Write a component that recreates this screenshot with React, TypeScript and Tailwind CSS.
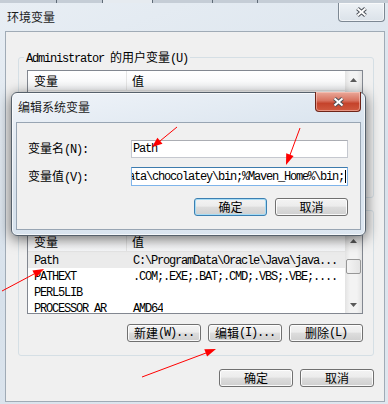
import clsx from "clsx";

const mono = "font-[family-name:Liberation_Mono,monospace] tracking-[-1.2px]";
const cjk = "font-[family-name:Noto_Sans_CJK_SC,sans-serif]";

// splits a label into ascii runs (narrow mono) and CJK runs
function Txt({ s }: { s: string }) {
  const parts = s.match(/[\x00-\x7f]+|[^\x00-\x7f]+/g) ?? [];
  return (
    <>
      {parts.map((p, i) => (
        <span key={i} className={clsx("whitespace-pre", /^[\x00-\x7f]/.test(p) ? mono : cjk)}>
          {p}
        </span>
      ))}
    </>
  );
}

function CloseGlyph() {
  return (
    <svg width="13" height="10" viewBox="0 0 13 10">
      <path d="M2.5 1.5 L10.5 8.5 M10.5 1.5 L2.5 8.5" stroke="#4a4f57" strokeWidth="4" />
      <path d="M2.5 1.5 L10.5 8.5 M10.5 1.5 L2.5 8.5" stroke="#ffffff" strokeWidth="2" />
    </svg>
  );
}

function Btn({ label, focus, wide }: { label: string; focus?: boolean; wide?: boolean }) {
  return (
    <div
      className={clsx(
        "h-[18px] rounded-[3px] border flex items-center justify-center text-[12px] leading-[14px] bg-[linear-gradient(#f3f3f3,#ececec_45%,#dddddd_50%,#cfcfcf)]",
        wide ? "w-[74px]" : "w-[73px]",
        focus
          ? "border-[#3c7fb1] shadow-[inset_0_0_0_1px_#a6dcf5]"
          : "border-[#707070] shadow-[inset_0_0_0_1px_rgba(255,255,255,0.85)]"
      )}
    >
      <Txt s={label} />
    </div>
  );
}

function Arrow({ up }: { up?: boolean }) {
  return (
    <div className="h-[17px] flex items-center justify-center">
      <svg width="7" height="4" viewBox="0 0 7 4">
        <path d={up ? "M0 4 L3.5 0 L7 4 Z" : "M0 0 L3.5 4 L7 0 Z"} fill="#5a5a5a" />
      </svg>
    </div>
  );
}

type Row = { name: string; value: string; sel?: boolean };

function ListView({ rows, height }: { rows: Row[]; height: string }) {
  return (
    <div className={clsx("border border-[#828790] bg-white flex overflow-hidden", height)}>
      <div className="flex-1 flex flex-col overflow-hidden text-[12px] leading-[14px]">
        <div className="h-[20px] shrink-0 flex border-b border-[#e5e5e5] bg-[linear-gradient(#ffffff,#f6f7f9)]">
          <div className="w-[99px] shrink-0 pl-[6px] border-r border-[#e5e5e5] flex items-center">
            <Txt s="变量" />
          </div>
          <div className="pl-[5px] flex items-center">
            <Txt s="值" />
          </div>
        </div>
        {rows.map((r) => (
          <div key={r.name} className={clsx("h-[16px] shrink-0 flex items-center", r.sel && "bg-[#ebebeb]")}>
            <div className="w-[99px] shrink-0 pl-[6px] overflow-hidden">
              <Txt s={r.name} />
            </div>
            <div className="pl-[6px] whitespace-nowrap overflow-hidden">
              <Txt s={r.value} />
            </div>
          </div>
        ))}
      </div>
      <div className="w-[17px] shrink-0 flex flex-col bg-[linear-gradient(90deg,#e3e3e3,#f3f3f3_30%,#f3f3f3_70%,#e3e3e3)]">
        <Arrow up />
        <div className="mx-[1px] mt-[10px] h-[15px] rounded-[2px] border border-[#979797] bg-[linear-gradient(90deg,#f4f4f4,#e4e4e4)]" />
        <div className="mt-auto">
          <Arrow />
        </div>
      </div>
    </div>
  );
}

const userRows: Row[] = [
  { name: "TEMP", value: "%USERPROFILE%\\AppData\\Local\\Temp" },
  { name: "TMP", value: "%USERPROFILE%\\AppData\\Local\\Temp" },
];

const sysRows: Row[] = [
  { name: "Path", value: "C:\\ProgramData\\Oracle\\Java\\java...", sel: true },
  { name: "PATHEXT", value: ".COM;.EXE;.BAT;.CMD;.VBS;.VBE;...." },
  { name: "PERL5LIB", value: "" },
  { name: "PROCESSOR_AR", value: "AMD64" },
];

export default function App() {
  return (
    <div className="w-[388px] h-[404px] relative overflow-hidden flex flex-col text-black bg-[linear-gradient(160deg,#e8eef4,#d7e1eb_55%,#dfe7ef)]">
      {/* strip of the window behind */}
      <div className="h-[3px] shrink-0 flex bg-[#c5cdd6]">
        <div className="w-[57px] border-r border-[#5f6b77]" />
        <div className="w-[46px] border-r border-[#5f6b77]" />
        <div className="w-[50px] border-r border-[#5f6b77] bg-[#e6ebf0]" />
        <div className="w-[60px] border-r border-[#5f6b77]" />
        <div className="w-[45px] border-r border-[#5f6b77]" />
      </div>

      {/* title bar */}
      <div className="h-[28px] shrink-0 flex items-start justify-between">
        <div className="ml-[7px] mt-[7px] text-[12px] leading-[14px] text-[#1b1b1b]">
          <Txt s="环境变量" />
        </div>
        <div className="mr-[3px] w-[47px] h-[19px] border border-t-0 border-[#7d8893] rounded-b-[4px] bg-[linear-gradient(#eef2f6,#dbe2e9)] shadow-[inset_0_0_0_1px_rgba(255,255,255,0.6)] flex items-center justify-center">
          <CloseGlyph />
        </div>
      </div>

      {/* client area */}
      <div className="ml-[5px] mr-[3px] mb-[2px] flex-1 border border-[#a0abb6] bg-[#f0f0f0] flex flex-col text-[12px] leading-[14px]">
        <div className="mt-[25px] ml-[12px] mr-[10px] border border-[#d5dfe5] rounded-[3px] pl-[8px] pr-[10px] pb-[11px] flex flex-col">
          <div className="-mt-[8px] -ml-[3px] self-start px-[2px] h-[14px] bg-[#f0f0f0]">
            <Txt s="Administrator 的用户变量(U)" />
          </div>
          <div className="mt-[6px]">
            <ListView rows={userRows} height="h-[90px]" />
          </div>
          <div className="mt-[8px] flex justify-end gap-[7px]">
            <Btn label="新建(N)..." wide />
            <Btn label="编辑(E)..." wide />
            <Btn label="删除(D)" wide />
          </div>
        </div>

        <div className="mt-[12px] ml-[12px] mr-[10px] border border-[#d5dfe5] rounded-[3px] pl-[8px] pr-[10px] pb-[13px] flex flex-col">
          <div className="-mt-[8px] -ml-[3px] self-start px-[2px] h-[14px] bg-[#f0f0f0]">
            <Txt s="系统变量(S)" />
          </div>
          <div className="mt-[14px]">
            <ListView rows={sysRows} height="h-[83px]" />
          </div>
          <div className="mt-[10px] flex justify-end gap-[7px]">
            <Btn label="新建(W)..." wide />
            <Btn label="编辑(I)..." wide />
            <Btn label="删除(L)" wide />
          </div>
        </div>

        <div className="mt-[13px] pr-[10px] flex justify-end gap-[7px]">
          <Btn label="确定" wide />
          <Btn label="取消" wide />
        </div>
      </div>

      {/* edit dialog on top */}
      <div className="absolute left-[11px] top-[92px] w-[355px] h-[144px] z-10 rounded-[6px] border border-[#56616c] bg-[linear-gradient(170deg,#f0f4f9,#d7e2ed_50%,#dde7f1)] shadow-[inset_0_0_0_1px_rgba(255,255,255,0.7),0_3px_14px_rgba(0,0,0,0.6)] flex flex-col">
        <div className="h-[29px] shrink-0 flex items-start justify-between">
          <div className="ml-[6px] mt-[7px] text-[12px] leading-[14px] text-[#1b1b1b]">
            <Txt s="编辑系统变量" />
          </div>
          <div className="-mt-[1px] mr-[4px] w-[46px] h-[20px] rounded-b-[4px] border border-t-0 border-[#6e2418] bg-[linear-gradient(#eaa99a,#d8725f_45%,#c5432b_60%,#d05a40)] shadow-[inset_0_0_0_1px_rgba(255,210,200,0.5)] flex items-center justify-center">
            <CloseGlyph />
          </div>
        </div>
        <div className="mx-[4px] h-[108px] shrink-0 border border-[#98a5b3] bg-[#f0f0f0] pt-[17px] pl-[11px] pr-[12px] flex flex-col text-[12px] leading-[14px]">
          <div className="flex items-center">
            <div className="w-[103px] shrink-0">
              <Txt s="变量名(N):" />
            </div>
            <div className="w-[218px] h-[18px] border border-[#c5c8cf] border-t-[#abadb3] bg-white pl-[1px] flex items-center overflow-hidden">
              <Txt s="Path" />
            </div>
          </div>
          <div className="mt-[9px] flex items-center">
            <div className="w-[103px] shrink-0">
              <Txt s="变量值(V):" />
            </div>
            <div className="w-[218px] h-[19px] border border-[#7eb4ea] border-t-[#3d7bad] bg-white pr-[1px] flex items-center justify-end overflow-hidden">
              <div className="shrink-0 whitespace-nowrap">
                <Txt s="Data\chocolatey\bin;%Maven_Home%\bin;" />
              </div>
              <div className="shrink-0 ml-[1px] w-[1px] h-[13px] bg-black" />
            </div>
          </div>
          <div className="mt-[12px] flex justify-end gap-[8px]">
            <Btn label="确定" focus />
            <Btn label="取消" />
          </div>
        </div>
      </div>

      {/* red annotation arrows */}
      <svg className="absolute inset-0 z-20 pointer-events-none" width="388" height="404" viewBox="0 0 388 404">
        <g stroke="#ff0000" strokeWidth="1" fill="none">
          <line x1="177" y1="127" x2="160" y2="141" />
          <line x1="300" y1="128" x2="290" y2="155" />
          <line x1="2" y1="291" x2="34" y2="274" />
          <line x1="142" y1="377" x2="206" y2="353" />
        </g>
        <g fill="#ff0000">
          <polygon points="152,147 162.5,143.8 157.4,137.7" />
          <polygon points="286,165 293.6,156.1 286.2,153.3" />
          <polygon points="44,269 36.1,277.6 32.4,270.6" />
          <polygon points="216,349 207.1,356.6 204.3,349.2" />
        </g>
      </svg>
    </div>
  );
}
